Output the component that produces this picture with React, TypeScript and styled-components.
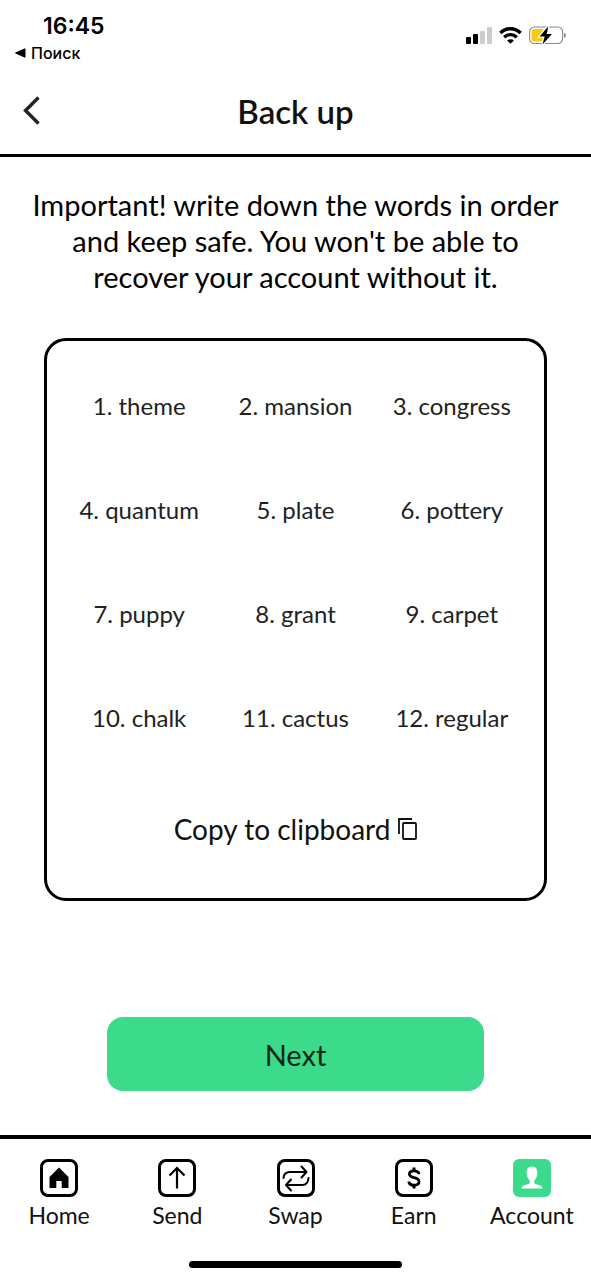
import React from 'react';
import styled, { createGlobalStyle, css } from 'styled-components';

const GlobalStyle = createGlobalStyle`
  *, *::before, *::after { box-sizing: border-box; }
  body {
    margin: 0;
    background: #fff;
    color: #111;
    font-family: Lato, 'Noto Sans', sans-serif;
  }
  button { font: inherit; color: inherit; }
`;

const Screen = styled.div`
  display: flex;
  flex-direction: column;
  min-height: 100vh;
  background: #fff;
`;

const StatusBar = styled.div`
  display: flex;
  justify-content: space-between;
  height: 68px;
  padding: 12px 24px 0 14px;
  color: #000;
  font-family: Inter, Roboto, sans-serif;
`;

const StatusLeft = styled.div`
  display: flex;
  flex-direction: column;
`;

const Time = styled.time`
  padding-left: 29px;
  font-size: 23px;
  font-weight: 600;
  line-height: 28px;
`;

const ReturnLink = styled.a`
  display: flex;
  align-items: center;
  gap: 5px;
  color: inherit;
  font-size: 16px;
  font-weight: 500;
  line-height: 26px;
  text-decoration: none;
`;

const StatusIcons = styled.div`
  display: flex;
  align-items: center;
  gap: 7px;
  height: 46px;
`;

const Header = styled.header`
  display: grid;
  grid-template-columns: 64px 1fr 64px;
  align-items: center;
  height: 89px;
  border-bottom: 3px solid #000;
`;

const BackButton = styled.button`
  display: flex;
  justify-content: center;
  padding: 0;
  border: 0;
  background: none;
  cursor: pointer;
`;

const Title = styled.h1`
  margin: 0;
  font-size: 33px;
  font-weight: 600;
  line-height: 40px;
  text-align: center;
`;

const Main = styled.main`
  flex: 1;
  display: flex;
  flex-direction: column;
  padding: 30px 44px 44px;
`;

const Notice = styled.p`
  margin: 0 -20px;
  color: #000;
  font-size: 29px;
  line-height: 36px;
  text-align: center;
`;

const Card = styled.section`
  display: flex;
  flex-direction: column;
  align-items: center;
  margin-top: 43px;
  padding: 13px 14px 49px;
  border: 3px solid #000;
  border-radius: 22px;
`;

const WordGrid = styled.ol`
  display: grid;
  grid-template-columns: repeat(3, 1fr);
  grid-auto-rows: 104px;
  align-items: center;
  width: 100%;
  margin: 0;
  padding: 0;
  list-style: none;
`;

const Word = styled.li`
  color: #222;
  font-size: 24px;
  line-height: 32px;
  text-align: center;
  white-space: nowrap;
`;

const CopyButton = styled.button`
  display: flex;
  align-items: center;
  gap: 8px;
  margin-top: 39px;
  padding: 0;
  border: 0;
  background: none;
  font-size: 28px;
  line-height: 40px;
  cursor: pointer;
`;

const NextButton = styled.button`
  align-self: center;
  width: 75%;
  height: 74px;
  margin-top: 116px;
  border: 0;
  border-radius: 16px;
  background: #3cdb8b;
  color: #0d2417;
  font-size: 29px;
  cursor: pointer;
`;

const TabBar = styled.nav`
  display: flex;
  padding-top: 20px;
  border-top: 4px solid #000;
`;

const Tab = styled.a`
  flex: 1;
  display: flex;
  flex-direction: column;
  align-items: center;
  gap: 2px;
  color: #111;
  font-size: 23px;
  line-height: 32px;
  text-decoration: none;
`;

const TabIcon = styled.span<{ $active?: boolean }>`
  display: flex;
  align-items: center;
  justify-content: center;
  width: 38px;
  height: 38px;
  border: 3px solid #000;
  border-radius: 8px;
  ${({ $active }) =>
    $active &&
    css`
      border-color: #3cdb8b;
      border-radius: 6px;
      background: #3cdb8b;
    `}
`;

const HomeIndicator = styled.div`
  align-self: center;
  width: 36%;
  height: 7px;
  margin: 30px 0 12px;
  border-radius: 4px;
  background: #000;
`;

const words = [
  'theme', 'mansion', 'congress',
  'quantum', 'plate', 'pottery',
  'puppy', 'grant', 'carpet',
  'chalk', 'cactus', 'regular',
];

const SignalIcon = () => (
  <svg width="27" height="17" viewBox="0 0 27 17" aria-hidden="true">
    <rect x="1" y="10" width="5" height="7" rx="1" />
    <rect x="8" y="7" width="5" height="10" rx="1" />
    <rect x="15" y="4" width="5" height="13" rx="1" fill="#ccc" />
    <rect x="22" y="0" width="5" height="17" rx="1" fill="#ccc" />
  </svg>
);

const WifiIcon = () => (
  <svg width="23" height="17" viewBox="0 0 23 17" fill="none" stroke="#000" strokeWidth="3.3" aria-hidden="true">
    <path d="M1.3 6 C7 .3 16 .3 21.7 6" />
    <path d="M5.2 10.2 C8.8 6.7 14.2 6.7 17.8 10.2" />
    <path d="M8 13.4 C10 11.7 13 11.7 15 13.4 L11.5 16.8Z" fill="#000" stroke="none" />
  </svg>
);

const BatteryIcon = () => (
  <svg width="38" height="19" viewBox="0 0 38 19" aria-hidden="true">
    <rect x="0.6" y="1" width="33" height="16.5" rx="5" fill="#fff" stroke="#888" strokeWidth="1.1" />
    <path d="M5.5 3 H14 V15.5 H5.5 Q2.5 15.5 2.5 12.5 V6 Q2.5 3 5.5 3Z" fill="#f7c916" />
    <path d="M35.5 7 Q37.5 9.2 35.5 11.5Z" fill="#888" stroke="#888" />
    <path d="M19.3 .2 L10.6 10.6 H15.6 L13.6 18.6 L22.900 8 H17.8Z" stroke="#fff" strokeWidth="2.4" paintOrder="stroke" />
  </svg>
);

const BackIcon = () => (
  <svg width="20" height="30" viewBox="0 0 20 30" fill="none" stroke="#222" strokeWidth="3.4" aria-hidden="true">
    <path d="M16.5 1.5 L3.5 14.5 L16.5 27.5" />
  </svg>
);

const CopyIcon = () => (
  <svg width="19" height="22" viewBox="0 0 19 22" fill="none" stroke="#111" strokeWidth="1.8" aria-hidden="true">
    <path d="M1 16 V1 H14" />
    <rect x="5" y="5" width="13" height="16" rx="1" />
  </svg>
);

const HomeIcon = () => (
  <svg width="20" height="22" viewBox="0 0 20 22" aria-hidden="true">
    <path d="M10 .5 L19.5 10 V21 H12.7 V14 H7.3 V21 H.5 V10Z" />
  </svg>
);

const SendIcon = () => (
  <svg width="18" height="24" viewBox="0 0 18 24" fill="none" stroke="#000" strokeWidth="2.2" aria-hidden="true">
    <path d="M9 22.5 V2 M1.5 9.5 L9 2 L16.5 9.5" />
  </svg>
);

const SwapIcon = () => (
  <svg width="28" height="28" viewBox="0 0 28 28" fill="none" stroke="#000" strokeWidth="2" strokeLinecap="round" strokeLinejoin="round" aria-hidden="true">
    <path d="M1.500 14 Q2 8 8 8 H24.5 M19.5 2.500 L24.5 8 L19.5 13.500" />
    <path d="M26.500 14 Q26 21 20 21 H4 M9 15.500 L4 21 L9 26.500" />
  </svg>
);

const DollarIcon = () => (
  <svg width="14" height="22" viewBox="0 0 14 22" fill="none" stroke="#000" strokeWidth="2.8" aria-hidden="true">
    <path d="M12 7.2 Q11.6 3.8 7 3.8 Q2.400 3.8 2.400 7 Q2.400 9.6 7 10.700 Q12 11.8 12 14.8 Q12 18.2 7 18.2 Q2.200 18.2 1.8 14.5" />
    <path d="M7 .5 V3.5 M7 18.5 V21.5" strokeWidth="3" />
  </svg>
);

const PersonIcon = () => (
  <svg width="22" height="24" viewBox="0 0 22 24" fill="#fff" aria-hidden="true">
    <path d="M11 .5 C6.8 .5 5.3 3.5 5.7 8 C6 11 7.2 13 8.7 14.3 V17 C7.5 19 .5 18.5 .5 22.5 H21.5 C21.5 18.5 14.5 19 13.3 17 V14.3 C14.8 13 16 11 16.3 8 C16.7 3.5 15.2 .5 11 .5Z" />
  </svg>
);

const tabs = [
  { label: 'Home', Icon: HomeIcon },
  { label: 'Send', Icon: SendIcon },
  { label: 'Swap', Icon: SwapIcon },
  { label: 'Earn', Icon: DollarIcon },
  { label: 'Account', Icon: PersonIcon, active: true },
];

export default function App() {
  return (
    <Screen>
      <GlobalStyle />
      <StatusBar>
        <StatusLeft>
          <Time>16:45</Time>
          <ReturnLink href="#search">
            <svg width="12" height="10" viewBox="0 0 12 10" aria-hidden="true">
              <path d="M1.5 5 L11 .8 V9.2Z" stroke="#000" strokeLinejoin="round" />
            </svg>
            Поиск
          </ReturnLink>
        </StatusLeft>
        <StatusIcons>
          <SignalIcon />
          <WifiIcon />
          <BatteryIcon />
        </StatusIcons>
      </StatusBar>

      <Header>
        <BackButton type="button" aria-label="Back">
          <BackIcon />
        </BackButton>
        <Title>Back up</Title>
      </Header>

      <Main>
        <Notice>
          Important! write down the words in order and keep safe. You won't be able to recover your
          account without it.
        </Notice>
        <Card>
          <WordGrid>
            {words.map((word, i) => (
              <Word key={word}>
                {i + 1}. {word}
              </Word>
            ))}
          </WordGrid>
          <CopyButton type="button">
            Copy to clipboard
            <CopyIcon />
          </CopyButton>
        </Card>
        <NextButton type="button">Next</NextButton>
      </Main>

      <TabBar>
        {tabs.map(({ label, Icon, active }) => (
          <Tab key={label} href={`#${label.toLowerCase()}`} aria-current={active ? 'page' : undefined}>
            <TabIcon $active={active}>
              <Icon />
            </TabIcon>
            {label}
          </Tab>
        ))}
      </TabBar>
      <HomeIndicator />
    </Screen>
  );
}
